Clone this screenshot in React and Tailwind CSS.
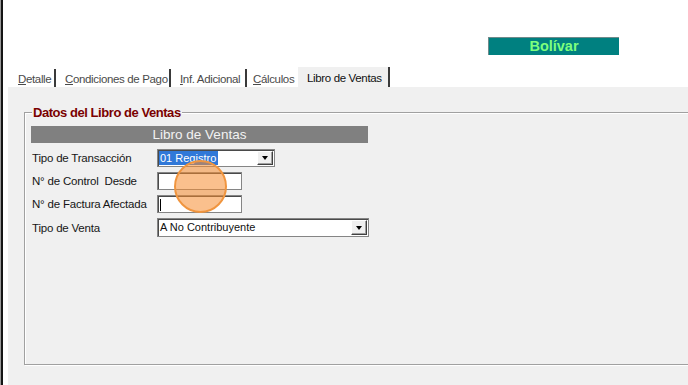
import React from "react";

function Arrow() {
  return (
    <div className="w-0 h-0 border-l-[3.5px] border-r-[3.5px] border-t-[4px] border-l-transparent border-r-transparent border-t-black" />
  );
}

function DropButton() {
  return (
    <div className="w-[16px] h-full bg-[#f0f0f0] border border-t-white border-l-white border-b-[#404040] border-r-[#404040] shadow-[inset_-1px_-1px_0_#a0a0a0] flex items-center justify-center">
      <Arrow />
    </div>
  );
}

function Field({ width, height = 18, children }) {
  return (
    <div
      className="bg-white border border-[#858585] shadow-[inset_1px_1px_0_#4a4a4a] p-[1px] flex items-stretch"
      style={{ width, height }}
    >
      {children}
    </div>
  );
}

function Row({ label, children }) {
  return (
    <div className="flex items-center">
      <div className="w-[126px] pl-[1px] pt-[2px] whitespace-pre text-[11.5px] tracking-[-0.2px] text-[#161616]">{label}</div>
      {children}
    </div>
  );
}

export default function App() {
  return (
    <div className="relative w-[688px] h-[385px] overflow-hidden flex bg-white font-['Liberation_Sans',Arial,sans-serif] text-[11px] leading-none text-[#111]">
      <div className="w-[1px] bg-[#9a9a9a]" />
      <div className="w-[2px] bg-[#151515]" />
      <div className="flex-1 flex flex-col min-w-0">
        {/* top white region */}
        <div className="h-[87px] flex flex-col shrink-0">
          <div className="mt-[37px] ml-[485px] w-[131px] h-[18px] bg-[#008080] border-t border-l border-[#708a8a] flex items-center justify-center text-[#7dff7d] font-bold text-[14.5px]">
            Bolívar
          </div>
          <div className="mt-[12px] h-[20px] flex items-end pl-[7px] text-[11.5px] tracking-[-0.35px]">
            <div className="w-[46px] h-[18px] pl-[8px] pt-[5px] border-r-2 border-r-[#3a3a3a] text-[#4a4a4a]">
              <span className="underline underline-offset-1">D</span>etalle
            </div>
            <div className="w-[115px] h-[18px] pl-[9px] pt-[5px] border-r-2 border-r-[#3a3a3a] text-[#4a4a4a]">
              <span className="underline underline-offset-1">C</span>ondiciones de Pago
            </div>
            <div className="w-[76px] h-[18px] pl-[9px] pt-[5px] border-r-2 border-r-[#3a3a3a] text-[#4a4a4a]">
              <span className="underline underline-offset-1">I</span>nf. Adicional
            </div>
            <div className="w-[51px] h-[18px] pl-[6px] pt-[5px] text-[#4a4a4a]">
              <span className="underline underline-offset-1">C</span>álculos
            </div>
            <div className="w-[92px] h-[20px] pl-[9px] pt-[6px] bg-[#f0f0f0] border-r-2 border-r-[#3a3a3a] text-[#111]">
              Libro de Ventas
            </div>
          </div>
        </div>

        {/* tab panel */}
        <div className="flex-1 ml-[5px] bg-[#f0f0f0] pt-[25px] pl-[16px]">
          <div className="relative w-[720px] h-[253px] border border-[#a0a0a0] shadow-[inset_1px_1px_0_#ffffff,1px_1px_0_#ffffff] pt-[13px] pl-[6px]">
            <div className="absolute -top-[7px] left-[7px] px-[1px] bg-[#f0f0f0] text-[#7a0000] font-bold text-[13px] tracking-[-0.45px] leading-[13px]">
              Datos del Libro de Ventas
            </div>
            <div className="w-[337px] h-[17px] bg-[#808080] text-[#f2f2f2] text-[13.5px] flex items-center justify-center">
              Libro de Ventas
            </div>
            <div className="mt-[6px] flex flex-col gap-[5px]">
              <Row label="Tipo de Transacción">
                <Field width={118}>
                  <div className="flex-1 flex items-stretch">
                    <span className="bg-[#3078d8] text-white pl-[1px] pr-[2px] flex items-center">01 Registro</span>
                  </div>
                  <DropButton />
                </Field>
              </Row>
              <Row label="N° de Control  Desde">
                <Field width={85} />
              </Row>
              <Row label="N° de Factura Afectada">
                <Field width={85}>
                  <div className="ml-[1px] mt-[2px] w-[1px] h-[12px] bg-black" />
                </Field>
              </Row>
              <Row label="Tipo de Venta">
                <Field width={212} height={19}>
                  <div className="flex-1 flex items-center pl-[1px]">A No Contribuyente</div>
                  <DropButton />
                </Field>
              </Row>
            </div>
          </div>
        </div>
      </div>

      {/* cursor highlight */}
      <div className="absolute left-[174px] top-[160px] w-[53px] h-[53px] rounded-full bg-[rgba(246,140,48,0.55)] border-2 border-[#f0953f]" />
    </div>
  );
}
